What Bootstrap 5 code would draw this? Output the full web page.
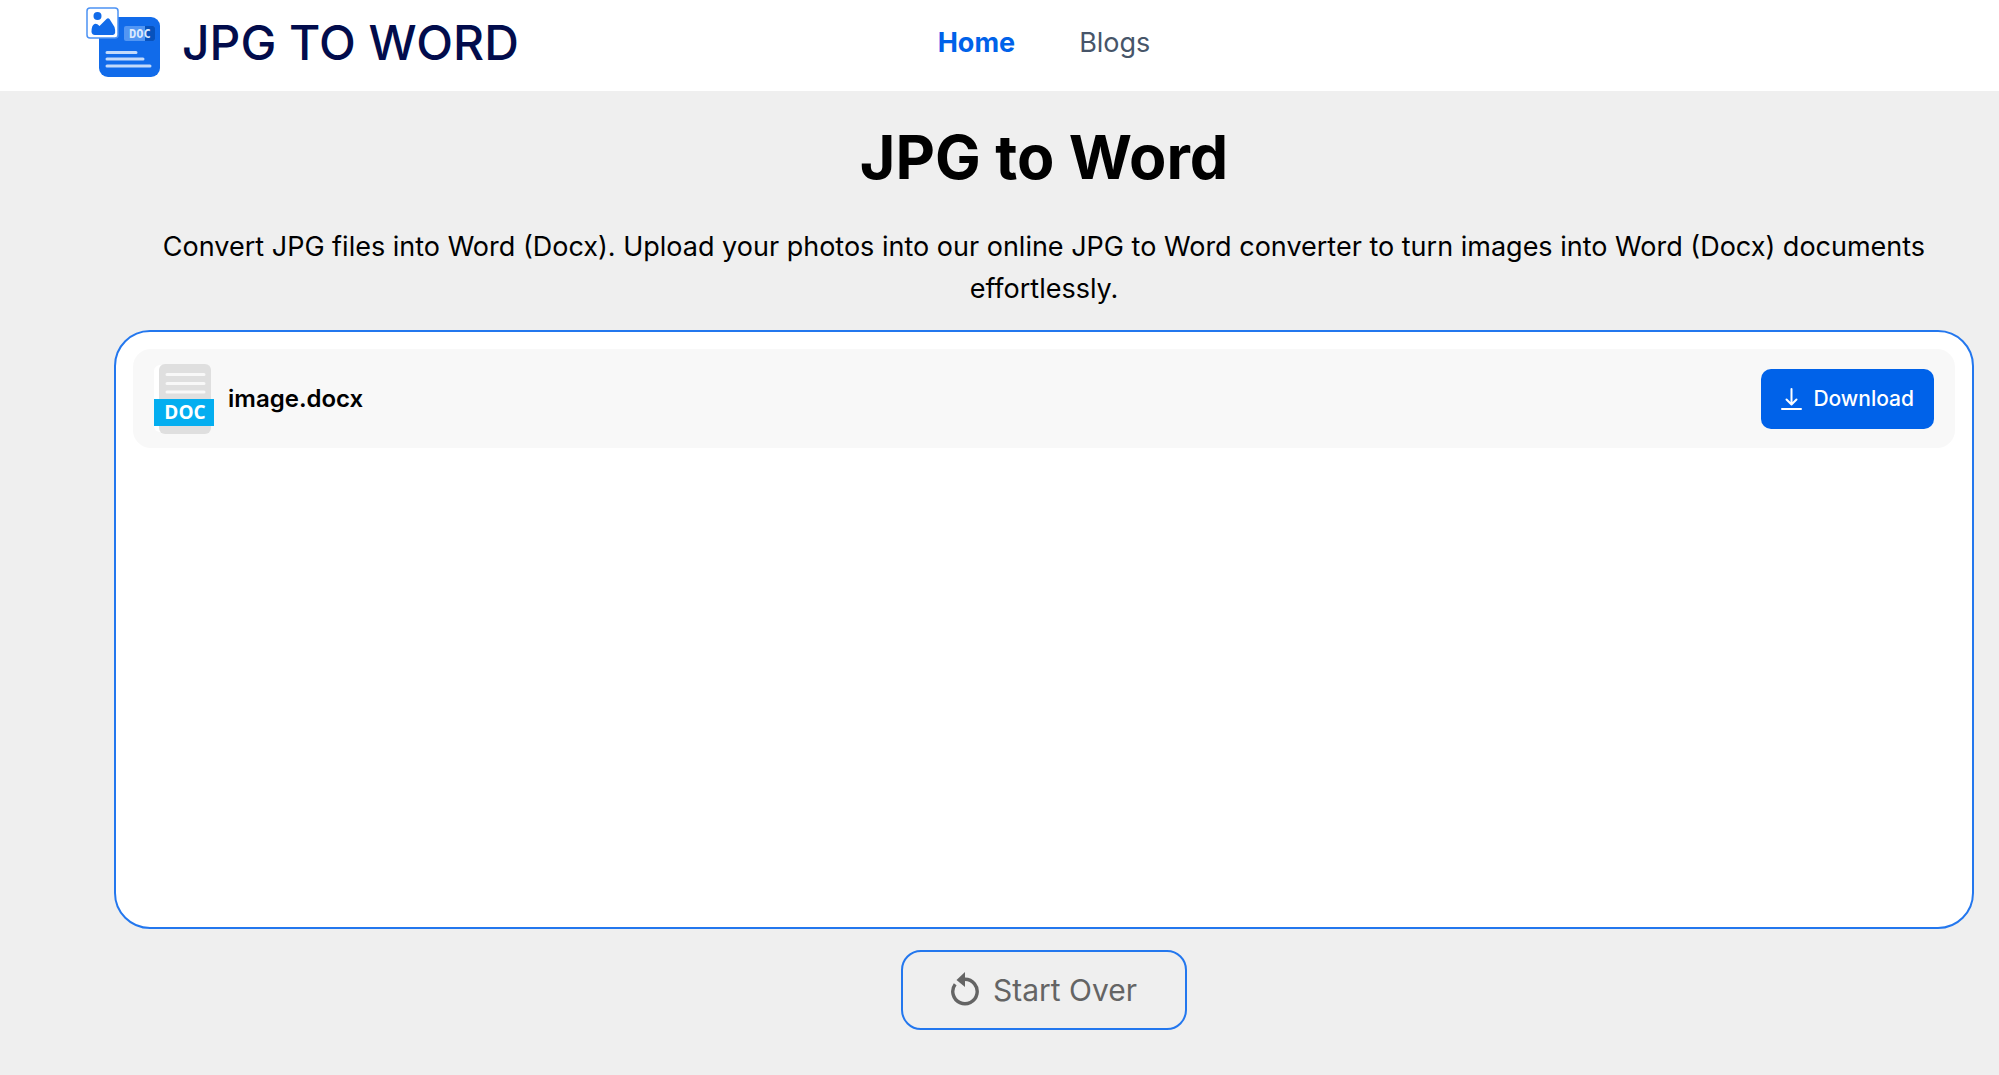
<!DOCTYPE html>
<html lang="en">
<head>
<meta charset="utf-8">
<meta name="viewport" content="width=device-width, initial-scale=1">
<title>JPG to Word</title>
<link href="https://cdn.jsdelivr.net/npm/bootstrap@5.3.0/dist/css/bootstrap.min.css" rel="stylesheet">
<style>
  body { font-family: Inter, "Liberation Sans", sans-serif; background: #efefef; color: #000; min-height: 100vh; }
  .site-shell { padding-left: 89px; }
  .site-header { background: #fff; height: 91px; padding-bottom: 5px; }
  .site-brand { color: #020c4c; font-size: 48px; line-height: 64px; font-weight: 500; gap: 21px; margin-left: -3px; }
  .site-brand:hover { color: #020c4c; }
  .site-links { gap: 64px; font-size: 27px; line-height: 40px; }
  .site-links a { color: #475569; }
  .site-links a.active { color: #0062e9; font-weight: 700; }
  .site-side { flex: 1 0 0; }
  .page-title { font-size: 61px; line-height: 72px; font-weight: 700; margin: 30px 0 33px; }
  .page-intro { font-size: 27px; line-height: 42px; margin-bottom: 20px; }
  .content-col { padding: 0 25px; }
  .result-panel { background: #fff; border: 2px solid #2377ee; border-radius: 36px; padding: 17px; min-height: 599px; }
  .file-row { background: #f8f8f8; border-radius: 18px; padding: 14px 21px; min-height: 99px; gap: 14px; }
  .file-name { font-size: 24px; line-height: 36px; font-weight: 600; }
  .btn-download { --bs-btn-bg: #0062e9; --bs-btn-color: #fff; --bs-btn-hover-bg: #0055cc; --bs-btn-hover-color: #fff; --bs-btn-border-width: 0; font-size: 21px; line-height: 32px; font-weight: 500; border-radius: 10px; padding: 14px 20px; gap: 11px; }
  .btn-restart { --bs-btn-color: #646464; --bs-btn-border-color: #2377ee; --bs-btn-border-width: 2px; --bs-btn-hover-border-color: #2377ee; --bs-btn-hover-bg: #fff; font-size: 30px; line-height: 46px; border-radius: 20px; padding: 15px 48px; gap: 14px; margin: 21px 0 32px; }
</style>
<script src="https://cdn.jsdelivr.net/npm/bootstrap@5.3.0/dist/js/bootstrap.bundle.min.js"></script>
</head>
<body>
<header class="site-header">
  <div class="site-shell d-flex align-items-center h-100">
    <div class="site-side d-flex">
      <a class="site-brand d-flex align-items-center text-decoration-none text-nowrap" href="#">
        <svg width="75" height="72" viewBox="-2 0 75 72" aria-hidden="true">
          <rect x="11" y="10" width="61" height="60" rx="9" fill="#116bea"/>
          <rect x="36" y="19" width="31" height="15" rx="2" fill="#5296f3"/>
          <path d="M57 19h8a2 2 0 0 1 2 2v11a2 2 0 0 1-2 2h-8z" fill="#0752bd"/>
          <text x="41" y="31" font-family="DejaVu Sans Mono, monospace" font-weight="700" font-size="12" fill="#dce9fd">DOC</text>
          <g stroke="#c3dafa" stroke-width="3" stroke-linecap="round"><path d="M19 45.500h29M19 52h36M19 59h43"/></g>
          <rect x="-1" y="1" width="31" height="30" rx="3" fill="#fff" stroke="#4c92f4" stroke-width="1.500"/>
          <circle cx="9.500" cy="9" r="4" fill="#116bea"/>
          <path d="M3.500 25q0-7 3-8 2-1 5 2l7-7q1.500-1.500 3 0l5 8q2 7-1.500 8H7q-3 0-3.500-3z" fill="#116bea"/>
        </svg>
        <span>JPG TO WORD</span>
      </a>
    </div>
    <nav class="site-links d-flex" aria-label="Main">
      <a class="active text-decoration-none" href="#" aria-current="page">Home</a>
      <a class="text-decoration-none" href="#">Blogs</a>
    </nav>
    <div class="site-side"></div>
  </div>
</header>
<main class="site-shell">
  <div class="content-col text-center">
    <h1 class="page-title">JPG to Word</h1>
    <p class="page-intro px-4">Convert JPG files into Word (Docx). Upload your photos into our online JPG to Word converter to turn images into Word (Docx) documents effortlessly.</p>
    <section class="result-panel text-start" aria-label="Converted files">
      <div class="file-row d-flex align-items-center">
        <svg width="60" height="70" viewBox="0 0 60 70" aria-hidden="true">
          <rect x="0" y="1" width="20" height="67" rx="6" fill="#fff"/>
          <rect x="5" y="0" width="52" height="70" rx="6" fill="#dfdfdf"/>
          <path d="M13 10.500h37M13 19.500h37M13 28h37" stroke="#f8f8f8" stroke-width="3" stroke-linecap="round"/>
          <rect x="0" y="35" width="60" height="27" fill="#04aef0"/>
          <text x="31" y="54.500" text-anchor="middle" font-family="Open Sans, sans-serif" font-weight="700" font-size="19" fill="#fff">DOC</text>
        </svg>
        <span class="file-name">image.docx</span>
        <button type="button" class="btn btn-download d-flex align-items-center ms-auto">
          <svg width="21" height="22" viewBox="0 0 21 22" fill="none" stroke="currentColor" stroke-width="2" stroke-linecap="round" stroke-linejoin="round" aria-hidden="true"><path d="M10.500 1v15M5.500 11.500l5 5 5-5M1 21h19"/></svg>
          Download
        </button>
      </div>
    </section>
    <button type="button" class="btn btn-restart d-inline-flex align-items-center">
      <svg width="28" height="36" viewBox="0 0 28 36" aria-hidden="true"><path d="M4.200 12.200A12.200 12.200 0 1 0 14 7.300" fill="none" stroke="currentColor" stroke-width="3.400"/><path d="M14 0v15L5.500 8z" fill="currentColor"/></svg>
      Start Over
    </button>
  </div>
</main>
</body>
</html>
